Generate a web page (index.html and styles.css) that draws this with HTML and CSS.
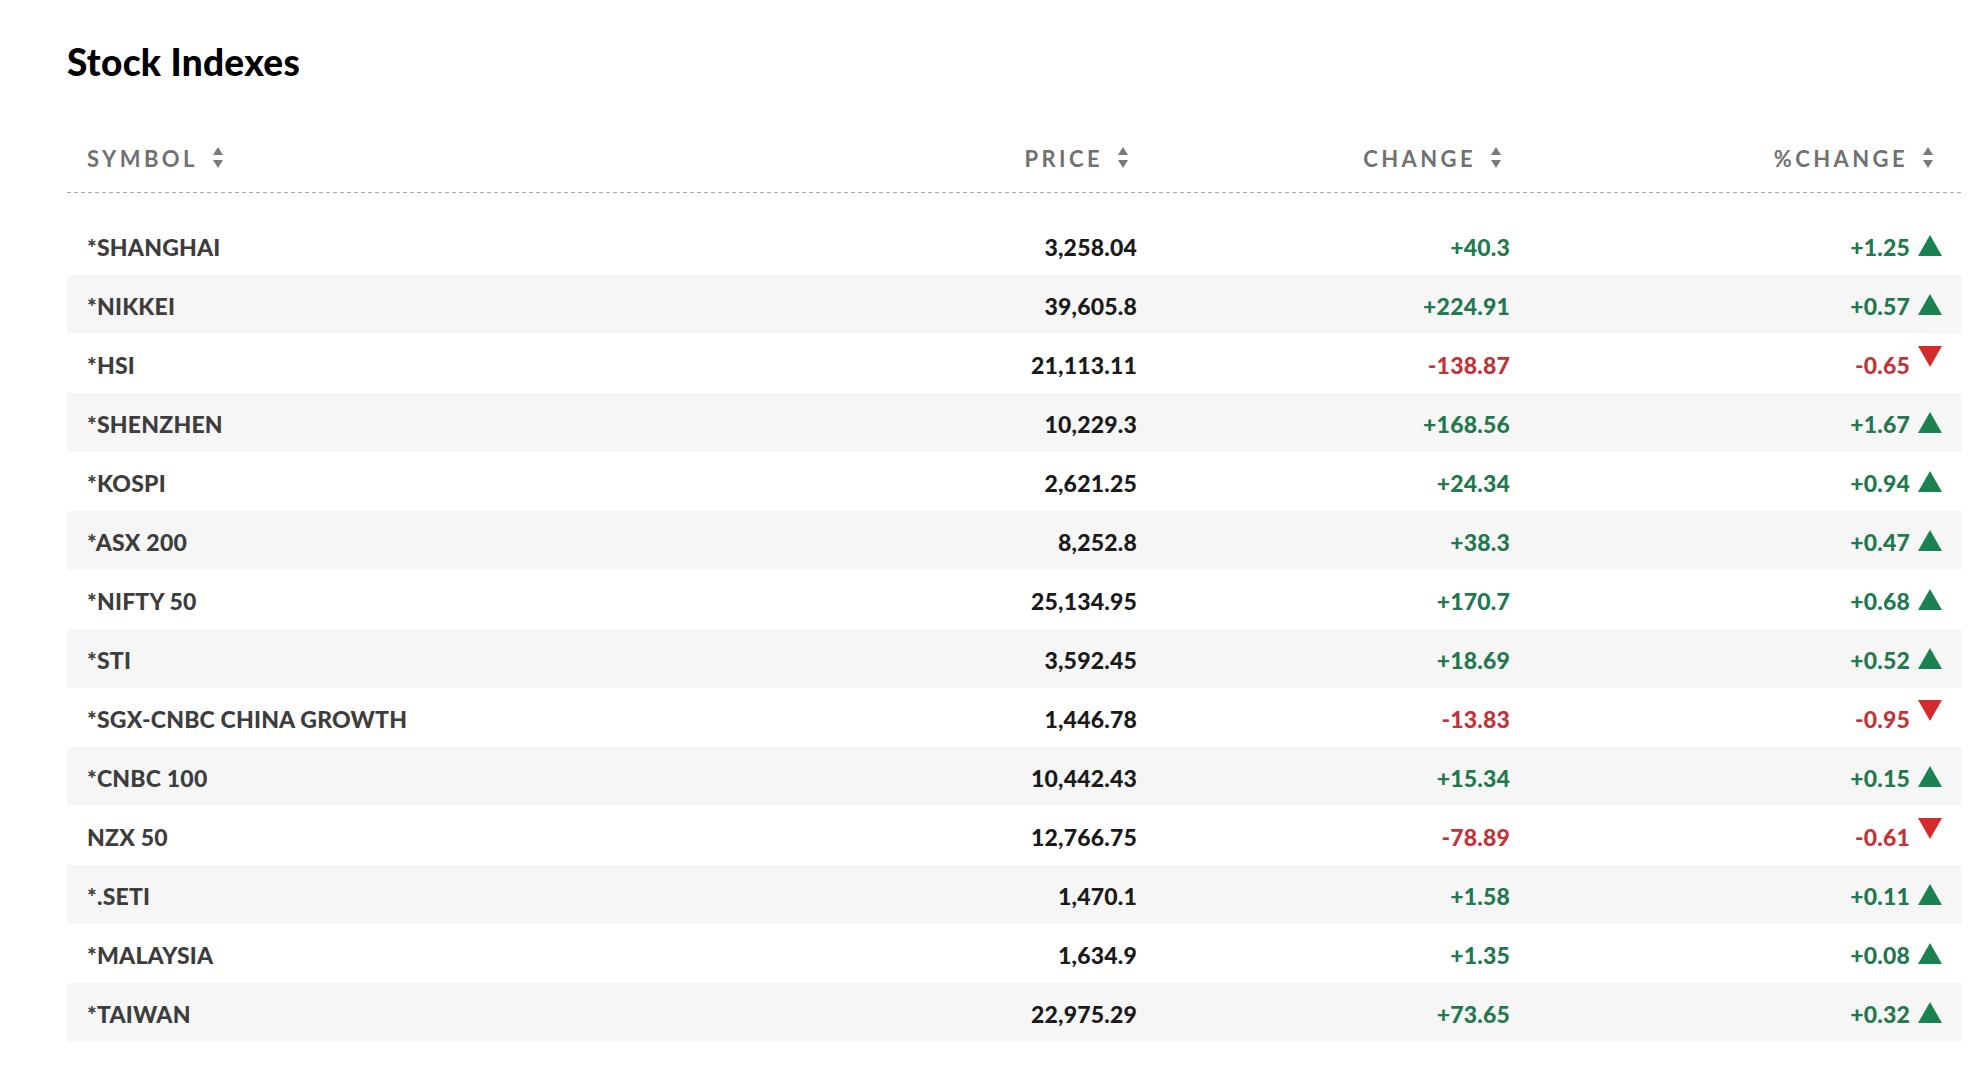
FILE: index.html
```html
<!DOCTYPE html>
<html lang="en">
<head>
<meta charset="utf-8">
<title>Stock Indexes</title>
<link rel="stylesheet" href="styles.css">
</head>
<body>
<div class="wrap">
  <h1 class="title">Stock Indexes</h1>
  <div class="quotes">
    <div class="row head">
      <div class="cell sym">SYMBOL <svg class="sort" viewBox="0 0 10 22"><path d="M5 0L10 8H0Z"/><path d="M0 13H10L5 21Z"/></svg></div>
      <div class="cell num">PRICE <svg class="sort" viewBox="0 0 10 22"><path d="M5 0L10 8H0Z"/><path d="M0 13H10L5 21Z"/></svg></div>
      <div class="cell num">CHANGE <svg class="sort" viewBox="0 0 10 22"><path d="M5 0L10 8H0Z"/><path d="M0 13H10L5 21Z"/></svg></div>
      <div class="cell num">%CHANGE <svg class="sort" viewBox="0 0 10 22"><path d="M5 0L10 8H0Z"/><path d="M0 13H10L5 21Z"/></svg></div>
    </div>
    <div class="body">
      <div class="row"><div class="cell sym">*SHANGHAI</div><div class="cell num price">3,258.04</div><div class="cell num up">+40.3</div><div class="cell num pct up">+1.25 <svg class="tri" viewBox="0 0 24 21"><path d="M12 0L24 21H0Z"/></svg></div></div>
      <div class="row"><div class="cell sym">*NIKKEI</div><div class="cell num price">39,605.8</div><div class="cell num up">+224.91</div><div class="cell num pct up">+0.57 <svg class="tri" viewBox="0 0 24 21"><path d="M12 0L24 21H0Z"/></svg></div></div>
      <div class="row"><div class="cell sym">*HSI</div><div class="cell num price">21,113.11</div><div class="cell num down">-138.87</div><div class="cell num pct down">-0.65 <svg class="tri" viewBox="0 0 24 21"><path d="M0 0H24L12 21Z"/></svg></div></div>
      <div class="row"><div class="cell sym">*SHENZHEN</div><div class="cell num price">10,229.3</div><div class="cell num up">+168.56</div><div class="cell num pct up">+1.67 <svg class="tri" viewBox="0 0 24 21"><path d="M12 0L24 21H0Z"/></svg></div></div>
      <div class="row"><div class="cell sym">*KOSPI</div><div class="cell num price">2,621.25</div><div class="cell num up">+24.34</div><div class="cell num pct up">+0.94 <svg class="tri" viewBox="0 0 24 21"><path d="M12 0L24 21H0Z"/></svg></div></div>
      <div class="row"><div class="cell sym">*ASX 200</div><div class="cell num price">8,252.8</div><div class="cell num up">+38.3</div><div class="cell num pct up">+0.47 <svg class="tri" viewBox="0 0 24 21"><path d="M12 0L24 21H0Z"/></svg></div></div>
      <div class="row"><div class="cell sym">*NIFTY 50</div><div class="cell num price">25,134.95</div><div class="cell num up">+170.7</div><div class="cell num pct up">+0.68 <svg class="tri" viewBox="0 0 24 21"><path d="M12 0L24 21H0Z"/></svg></div></div>
      <div class="row"><div class="cell sym">*STI</div><div class="cell num price">3,592.45</div><div class="cell num up">+18.69</div><div class="cell num pct up">+0.52 <svg class="tri" viewBox="0 0 24 21"><path d="M12 0L24 21H0Z"/></svg></div></div>
      <div class="row"><div class="cell sym">*SGX-CNBC CHINA GROWTH</div><div class="cell num price">1,446.78</div><div class="cell num down">-13.83</div><div class="cell num pct down">-0.95 <svg class="tri" viewBox="0 0 24 21"><path d="M0 0H24L12 21Z"/></svg></div></div>
      <div class="row"><div class="cell sym">*CNBC 100</div><div class="cell num price">10,442.43</div><div class="cell num up">+15.34</div><div class="cell num pct up">+0.15 <svg class="tri" viewBox="0 0 24 21"><path d="M12 0L24 21H0Z"/></svg></div></div>
      <div class="row"><div class="cell sym">NZX 50</div><div class="cell num price">12,766.75</div><div class="cell num down">-78.89</div><div class="cell num pct down">-0.61 <svg class="tri" viewBox="0 0 24 21"><path d="M0 0H24L12 21Z"/></svg></div></div>
      <div class="row"><div class="cell sym">*.SETI</div><div class="cell num price">1,470.1</div><div class="cell num up">+1.58</div><div class="cell num pct up">+0.11 <svg class="tri" viewBox="0 0 24 21"><path d="M12 0L24 21H0Z"/></svg></div></div>
      <div class="row"><div class="cell sym">*MALAYSIA</div><div class="cell num price">1,634.9</div><div class="cell num up">+1.35</div><div class="cell num pct up">+0.08 <svg class="tri" viewBox="0 0 24 21"><path d="M12 0L24 21H0Z"/></svg></div></div>
      <div class="row"><div class="cell sym">*TAIWAN</div><div class="cell num price">22,975.29</div><div class="cell num up">+73.65</div><div class="cell num pct up">+0.32 <svg class="tri" viewBox="0 0 24 21"><path d="M12 0L24 21H0Z"/></svg></div></div>
    </div>
  </div>
</div>
</body>
</html>
```
FILE: styles.css
```css
html, body {
  margin: 0;
  padding: 0;
  background: #ffffff;
}

body {
  font-family: Lato, "Liberation Sans", sans-serif;
  color: #1a1a1a;
}

.wrap {
  padding: 40px 20px 0 67px;
}

.title {
  margin: 0;
  font-size: 37px;
  line-height: 1.2;
  font-weight: 900;
  letter-spacing: 0.3px;
  color: #000000;
}

.quotes {
  margin-top: 42px;
  width: 1895px;
}

.row {
  display: grid;
  grid-template-columns: 790px 300px 373px 432px;
  align-items: center;
}

.head {
  padding: 20px 0 20px;
  background-image: repeating-linear-gradient(to right, #a8a8a8 0 4px, transparent 4px 7px);
  background-size: 100% 1px;
  background-repeat: no-repeat;
  background-position: left bottom;
}

.head .cell {
  font-size: 22px;
  line-height: 1.2;
  font-weight: 700;
  letter-spacing: 3.4px;
  color: #717171;
  display: flex;
  align-items: center;
  gap: 15px;
}

.head .num {
  justify-content: flex-end;
  padding-right: 29px;
}

.head .sym {
  padding-left: 20px;
}

.sort {
  width: 10px;
  height: 22px;
  fill: #7a7a7a;
  margin-top: -4px;
}

.body {
  margin-top: 23px;
}

.body .row {
  height: 59px;
  font-size: 23px;
  font-weight: 900;
  letter-spacing: 0.2px;
}

.body .row:nth-child(even) {
  background: #f6f6f6;
}

.body .cell {
  padding-top: 4px;
}

.body .sym {
  padding-left: 20px;
  color: #3d3d3d;
}

.body .num {
  text-align: right;
  padding-right: 20px;
}

.price {
  color: #1a1a1a;
}

.up {
  color: #22784f;
}

.down {
  color: #c0343a;
}

.pct {
  display: flex;
  justify-content: flex-end;
  align-items: center;
  gap: 8px;
  padding-right: 19px;
}

.tri {
  width: 24px;
  height: 21px;
  margin-top: -4px;
}

.up .tri {
  fill: #1a8150;
}

.down .tri {
  fill: #d42a2a;
  margin-top: -18px;
}
```
